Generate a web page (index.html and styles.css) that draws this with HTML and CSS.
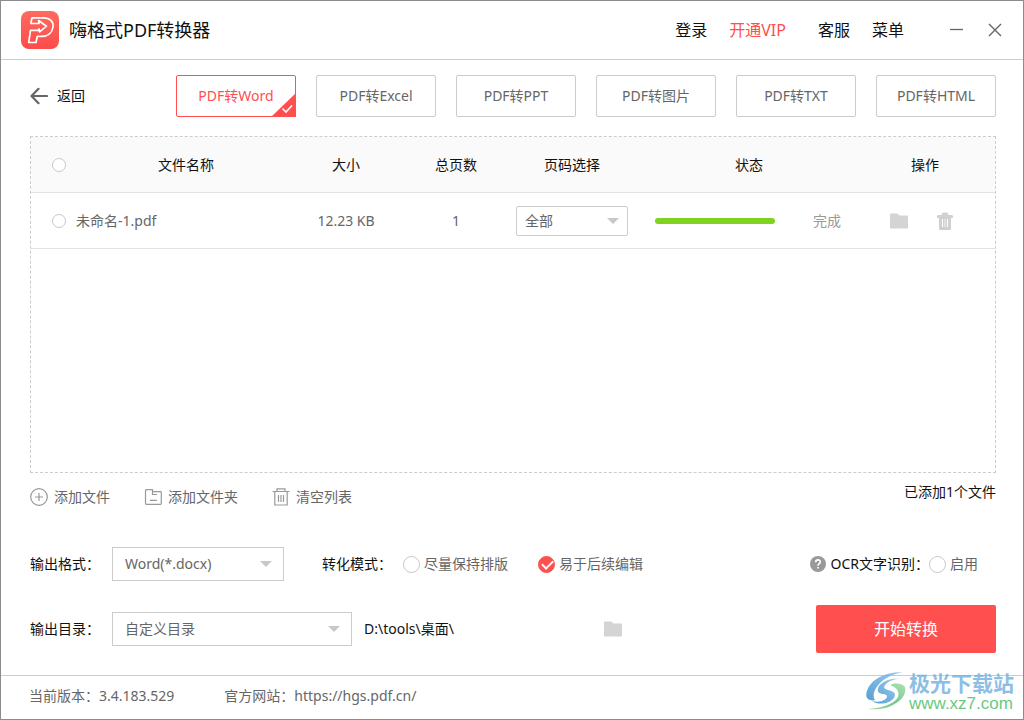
FILE: index.html
```html
<!DOCTYPE html>
<html lang="zh-CN">
<head>
<meta charset="utf-8">
<title>嗨格式PDF转换器</title>
<link rel="stylesheet" href="styles.css">
</head>
<body>
<div class="window">
  <header class="titlebar">
    <svg class="logo" width="38" height="38" viewBox="0 0 38 38" aria-hidden="true">
      <defs><linearGradient id="lg" x1="0" y1="0" x2="0" y2="1"><stop offset="0" stop-color="#ff6a5e"/><stop offset="1" stop-color="#fc4c4c"/></linearGradient></defs>
      <rect width="38" height="38" rx="8" fill="url(#lg)"/>
      <path d="M11 6.800H22.500C28.800 6.800 32.800 10.500 32 16C31.200 21.800 27 25.300 21 25.300H16.300L15 31.500H7.700L9.500 19.300H17.800M11 6.800L9.800 12.500H18L17.600 9.500L25.500 15.200L18.600 20.900L18 17.800" fill="none" stroke="#fff" stroke-width="1.700" stroke-linejoin="round" stroke-linecap="round"/>
    </svg>
    <h1 class="app-name">嗨格式PDF转换器</h1>
    <nav class="nav">
      <div class="nav-group"><a href="#">登录</a><a href="#" class="vip">开通VIP</a></div>
      <div class="nav-group"><a href="#">客服</a><a href="#">菜单</a></div>
    </nav>
    <div class="controls">
      <button type="button" class="icon-btn" aria-label="最小化"><svg width="18" height="18" viewBox="0 0 18 18"><path d="M2 8.500H15" stroke="#666" stroke-width="1.300"/></svg></button>
      <button type="button" class="icon-btn" aria-label="关闭"><svg width="18" height="18" viewBox="0 0 18 18"><path d="M3 3L15 15M15 3L3 15" stroke="#666" stroke-width="1.400"/></svg></button>
    </div>
  </header>

  <main class="content">
    <div class="modes">
      <button type="button" class="back">
        <svg width="18" height="18" viewBox="0 0 18 18" aria-hidden="true"><path d="M17 9H2M8.500 1.800L1.500 9L8.500 16.200" fill="none" stroke="#666" stroke-width="2.200" stroke-linecap="round" stroke-linejoin="round"/></svg>
        <span>返回</span>
      </button>
      <div class="tabs">
        <button type="button" class="tab active">PDF转Word<svg class="corner" width="26" height="24" viewBox="0 0 26 24" aria-hidden="true"><path d="M26 0V24H1Z" fill="#ff4f4f"/><path d="M12.500 15.500L16 19L22 12.500" fill="none" stroke="#fff" stroke-width="1.600"/></svg></button>
        <button type="button" class="tab">PDF转Excel</button>
        <button type="button" class="tab">PDF转PPT</button>
        <button type="button" class="tab">PDF转图片</button>
        <button type="button" class="tab">PDF转TXT</button>
        <button type="button" class="tab">PDF转HTML</button>
      </div>
    </div>

    <section class="panel">
      <table class="files">
        <colgroup><col class="c-check"><col><col class="c-size"><col class="c-pages"><col class="c-range"><col class="c-status"><col class="c-actions"></colgroup>
        <thead>
          <tr>
            <th class="check-cell"><input type="checkbox" class="round small" aria-label="全选"></th>
            <th>文件名称</th><th>大小</th><th>总页数</th><th>页码选择</th><th>状态</th><th class="action-cell">操作</th>
          </tr>
        </thead>
        <tbody>
          <tr>
            <td class="check-cell"><input type="checkbox" class="round small" id="file1"></td>
            <td class="name-cell"><label for="file1">未命名-1.pdf</label></td>
            <td>12.23 KB</td>
            <td>1</td>
            <td><div class="select compact"><select aria-label="页码选择"><option>全部</option></select></div></td>
            <td><div class="status"><div class="bar" role="progressbar" aria-label="转换进度" aria-valuenow="100"></div><span>完成</span></div></td>
            <td class="action-cell"><div class="actions">
              <button type="button" class="icon-btn" aria-label="打开文件夹"><svg width="18" height="18" viewBox="0 0 18 18"><path d="M1 1.500H7.500L9.500 3.500H17Q18 3.500 18 4.500V15.500Q18 16.500 17 16.500H1Q0 16.500 0 15.500V2.500Q0 1.500 1 1.500Z" fill="#d4d4d4"/></svg></button>
              <button type="button" class="icon-btn" aria-label="删除"><svg width="18" height="18" viewBox="0 0 18 18"><path d="M5.500 3Q5.500 .5 7.500 .5H10.500Q12.500 .5 12.500 3H16Q17 3 17 4.500V6H15V17Q15 18 14 18H4Q3 18 3 17V6H1V4.500Q1 3 2 3Z" fill="#d0d0d0"/><path d="M6.500 7V15M11.500 7V15" stroke="#fff" stroke-width="1"/><path d="M9 7V15" stroke="#f2f2f2" stroke-width="1"/></svg></button>
            </div></td>
          </tr>
        </tbody>
      </table>
    </section>

    <div class="toolbar">
      <button type="button" class="tool"><svg width="18" height="18" viewBox="0 0 18 18" aria-hidden="true"><circle cx="9" cy="9" r="8.300"/><path d="M5 9H13M9 5V13"/></svg>添加文件</button>
      <button type="button" class="tool"><svg width="18" height="18" viewBox="0 0 18 18" aria-hidden="true"><path d="M2.500 1.700H8.500V3.700H16.500Q17.300 3.700 17.300 4.500V15.500Q17.300 16.300 16.500 16.300H2.300Q1.500 16.300 1.500 15.500V2.700Q1.500 1.700 2.500 1.700ZM8.500 3.700V6.500H13M6 12.300H13"/></svg>添加文件夹</button>
      <button type="button" class="tool"><svg width="18" height="18" viewBox="0 0 18 18" aria-hidden="true"><path d="M.5 3.500H17.500M5 3.500V.8H13V3.500M2.800 3.500V17H15.200V3.500M6.500 7V14M9 7V14M11.500 7V14"/></svg>清空列表</button>
      <span class="count">已添加1个文件</span>
    </div>

    <form class="settings">
      <div class="row">
        <label class="caption" for="format">输出格式：</label>
        <div class="select format"><select id="format"><option>Word(*.docx)</option></select></div>
        <span class="mode-label">转化模式：</span>
        <label class="option first"><input type="radio" name="mode" class="round">尽量保持排版</label>
        <label class="option"><input type="radio" name="mode" class="round" checked>易于后续编辑</label>
        <div class="ocr">
          <svg width="16" height="16" viewBox="0 0 16 16" aria-hidden="true"><circle cx="8" cy="8" r="8" fill="#999"/><path d="M5.700 6.200C5.700 3 10.400 3.200 10.300 6C10.200 7.700 8 7.700 8 9.700M8 11V12.600" fill="none" stroke="#fff" stroke-width="1.600"/></svg>
          <span class="ocr-label">OCR文字识别：</span>
          <label class="option"><input type="checkbox" class="round">启用</label>
        </div>
      </div>
      <div class="row">
        <label class="caption" for="dir">输出目录：</label>
        <div class="select dir"><select id="dir"><option>自定义目录</option></select></div>
        <output class="path" for="dir">D:\tools\桌面\</output>
        <button type="button" class="icon-btn" aria-label="选择目录"><svg width="18" height="18" viewBox="0 0 18 18"><path d="M1 1.500H7.500L9.500 3.500H17Q18 3.500 18 4.500V15.500Q18 16.500 17 16.500H1Q0 16.500 0 15.500V2.500Q0 1.500 1 1.500Z" fill="#d4d4d4"/></svg></button>
        <button type="button" class="start">开始转换</button>
      </div>
    </form>
  </main>

  <footer class="footer">
    <span>当前版本：3.4.183.529</span>
    <span>官方网站：<a href="#">https://hgs.pdf.cn/</a></span>
  </footer>

  <div class="watermark">
    <svg width="42" height="40" viewBox="0 0 42 40" aria-hidden="true">
      <defs>
        <linearGradient id="wb" x1="0" y1="1" x2="1" y2="0"><stop offset="0" stop-color="#3d8fd0"/><stop offset="1" stop-color="#8cc4ea"/></linearGradient>
        <linearGradient id="wg" x1="0" y1="1" x2="1" y2="0"><stop offset="0" stop-color="#8fd08a"/><stop offset=".5" stop-color="#5fc07c"/><stop offset="1" stop-color="#a5dca8"/></linearGradient>
      </defs>
      <path d="M37 0C23 0 11 4 4 13C-1 20 -1 27 4 28C7 29 9 28 9 28C6 24 8 17 14 11C20 5 28 2 37 0Z" fill="url(#wb)"/>
      <path d="M34 7C26 6 18 8 13 14C10 20 13 22 18 22C22 23 22 26 18 28C15 30 10 30 6 29C14 34 24 31 28 26C31 21 27 19 22 18C18 17 17 15 20 12C23 9 28 7 34 7Z" fill="url(#wb)"/>
      <path d="M24 13C31 10 37 12 39 15C41 22 35 29 27 33C20 37 11 38 2 37C17 36 28 32 32 25C34 19 30 15 24 13Z" fill="url(#wg)"/>
    </svg>
    <div class="watermark-text"><span class="site">极光下载站</span><span class="url">www.xz7.com</span></div>
  </div>
</div>
</body>
</html>
```
FILE: styles.css
```css
* { box-sizing: border-box; }
body {
  margin: 0;
  font: 14px/20px "Noto Sans", "Noto Sans CJK SC", sans-serif;
  color: #111;
  background: #fff;
}
button, select, input { font: inherit; color: inherit; margin: 0; }
button { background: none; border: 0; padding: 0; cursor: pointer; }
a { color: inherit; text-decoration: none; }
svg { display: block; flex: none; }

.window {
  position: relative;
  display: flex;
  flex-direction: column;
  min-height: 100vh;
  border: 1px solid #8c8c8c;
}

.titlebar {
  display: flex;
  align-items: center;
  height: 59px;
  padding: 0 19px 0 20px;
  border-bottom: 1px solid #ccc;
}
.app-name { margin: 0 auto 0 10px; font-size: 18px; line-height: 24px; font-weight: 400; }
.nav { display: flex; gap: 32px; font-size: 16px; line-height: 24px; }
.nav-group { display: flex; gap: 22px; }
.vip { color: #ff4f4f; }
.controls { display: flex; gap: 20px; margin-left: 44px; }

.content { flex: 1; display: flex; flex-direction: column; padding: 15px 27px 22px 29px; }

.modes { display: flex; align-items: center; }
.back { display: flex; align-items: center; gap: 9px; width: 146px; }
.tabs { flex: 1; display: grid; grid-template-columns: repeat(6, 1fr); gap: 20px; }
.tab {
  position: relative;
  height: 42px;
  border: 1px solid #ccc;
  border-radius: 2px;
  color: #666;
}
.tab.active { border-color: #ff4f4f; color: #ff4f4f; }
.corner { position: absolute; right: -1px; bottom: -1px; }

.panel { flex: 1; margin-top: 19px; border: 1px dashed #ccc; }
.files { width: 100%; table-layout: fixed; border-collapse: separate; border-spacing: 0; text-align: center; }
.files th, .files td { height: 56px; padding: 0; border-bottom: 1px solid #e2e2e2; font-weight: 400; }
.files th { background: #fafafa; }
.files td { color: #666; }
.files .name-cell { text-align: left; }
.files .check-cell { padding-left: 10px; }
.files .action-cell { padding-right: 15px; }
.c-check { width: 45px; }
.c-size { width: 100px; }
.c-pages { width: 120px; }
.c-range { width: 112px; }
.c-status { width: 242px; }
.c-actions { width: 125px; }

.status { display: flex; align-items: center; justify-content: center; gap: 38px; padding-right: 2px; color: #999; }
.bar { width: 120px; height: 6px; border-radius: 3px; background: #7ed321; }
.actions { display: flex; justify-content: center; gap: 28px; padding-right: 6px; }

.round {
  appearance: none;
  display: block;
  flex: none;
  width: 17px;
  height: 17px;
  border: 1px solid #c8c8c8;
  border-radius: 50%;
  background: #fff;
}
.round.small { width: 14px; height: 14px; margin: 0 auto; }
.round:checked { position: relative; border-color: #ff4f4f; background: #ff4f4f; }
.round:checked::after {
  content: "";
  position: absolute;
  left: 3px;
  top: 3px;
  width: 9px;
  height: 5px;
  border: solid #fff;
  border-width: 0 0 2px 2px;
  transform: rotate(-45deg);
}

.select { position: relative; }
.select select {
  appearance: none;
  display: block;
  width: 100%;
  height: 34px;
  padding: 0 32px 0 12px;
  border: 1px solid #ccc;
  border-radius: 0;
  background: #fff;
  color: #666;
}
.select::after {
  content: "";
  position: absolute;
  right: 12px;
  top: 50%;
  margin-top: -3px;
  border: 6px solid transparent;
  border-top-color: #c8c8c8;
  border-bottom: 0;
  pointer-events: none;
}
.select.compact select { height: 30px; padding: 0 24px 0 8px; border-radius: 2px; }
.select.compact::after { right: 9px; }
.format { width: 172px; }
.dir { width: 240px; }

.toolbar { display: flex; align-items: center; gap: 34px; height: 48px; }
.tool { display: flex; align-items: center; gap: 6px; color: #666; }
.tool svg { fill: none; stroke: #999; stroke-width: 1.2; }
.count { margin-left: auto; padding-bottom: 10px; }

.settings { display: flex; flex-direction: column; gap: 24px; margin-top: 26px; }
.row { display: flex; align-items: center; }
.caption { width: 82px; }
.mode-label { width: 81px; margin-left: 38px; }
.option { display: flex; align-items: center; gap: 4px; color: #666; }
.option.first { margin-right: 30px; }
.ocr { display: flex; align-items: center; margin-left: auto; padding-right: 18px; }
.ocr-label { margin-left: 5px; }
.path { width: 240px; margin-left: 12px; }
.icon-btn { flex: none; }
.start {
  width: 180px;
  height: 48px;
  margin-left: auto;
  border-radius: 2px;
  background: #ff4f4f;
  color: #fff;
  font-size: 16px;
}

.footer {
  display: flex;
  gap: 50px;
  padding: 10px 28px 13px;
  border-top: 1px solid #ccc;
  color: #666;
}

.watermark {
  position: absolute;
  right: 9px;
  bottom: 6px;
  display: flex;
  align-items: center;
  gap: 1px;
  opacity: .85;
}
.watermark-text { display: flex; flex-direction: column; }
.site { font-size: 21px; line-height: 24px; font-weight: 700; color: #79b4e2; }
.url { font: 17px/18px "Liberation Sans", sans-serif; color: #4fbf6c; }
```
